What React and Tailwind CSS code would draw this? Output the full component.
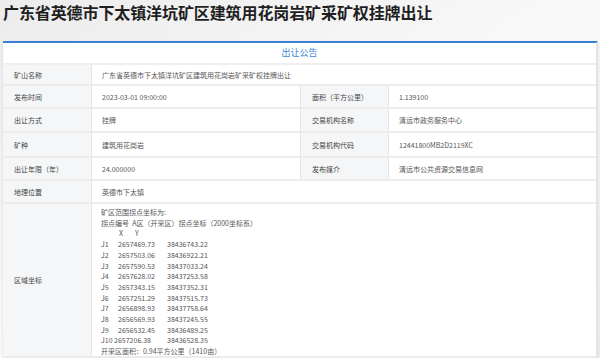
import React from 'react';

const info = [
  { label: '矿山名称', value: '广东省英德市下太镇洋坑矿区建筑用花岗岩矿采矿权挂牌出让', h: 'h-[21px]' },
  { label: '发布时间', value: '2023-03-01 09:00:00', label2: '面积（平方公里）', value2: '1.139100', h: 'h-[23px]' },
  { label: '出让方式', value: '挂牌', label2: '交易机构名称', value2: '清远市政务服务中心', h: 'h-[24px]' },
  { label: '矿种', value: '建筑用花岗岩', label2: '交易机构代码', value2: '12441800MB2D2119XC', h: 'h-[25px]' },
  { label: '出让年限（年）', value: '24.000000', label2: '发布媒介', value2: '清远市公共资源交易信息网', h: 'h-[23px]' },
  { label: '地理位置', value: '英德市下太镇', h: 'h-[23px]' },
];

const points = [
  ['J1', '2657469.73', '38436743.22'],
  ['J2', '2657503.06', '38436922.21'],
  ['J3', '2657590.53', '38437033.24'],
  ['J4', '2657628.02', '38437253.58'],
  ['J5', '2657343.15', '38437352.31'],
  ['J6', '2657251.29', '38437515.73'],
  ['J7', '2656898.93', '38437758.64'],
  ['J8', '2656569.93', '38437245.55'],
  ['J9', '2656532.45', '38436489.25'],
];

const Label = ({ children, className = '' }) => (
  <div className={`bg-[#f5f6f7] text-[#444] flex items-center pl-[11px] ${className}`}>{children}</div>
);

const Value = ({ children, className = '' }) => (
  <div className={`bg-white text-[#555] flex items-center pl-[10px] ${className}`}>{children}</div>
);

const App = () => {
  return (
    <div className="w-[600px] h-[358px] overflow-hidden bg-gradient-to-br from-[#ececec] via-[#f9f9f9] to-[#efefef] font-['Noto_Sans_CJK_SC',sans-serif]">
      <h1 className="h-[41px] pl-[3px] pt-[2px] text-[16px] leading-[20px] font-bold text-[#1f1f1f] tracking-[-0.1px]">
        广东省英德市下太镇洋坑矿区建筑用花岗岩矿采矿权挂牌出让
      </h1>

      <div className="ml-[3px] w-[595px] bg-white border-t-2 border-[#3a7fd8] border-r-2 border-r-[#e4e4e4] shadow-sm">
        <div className="h-[22px] flex items-center justify-center text-[9px] text-[#3d86d6] border-b-2 border-[#efefef]">
          出让公告
        </div>

        <div className="text-[7px] leading-[10px]">
          {info.map((r) => (
            <div key={r.label} className={`flex border-b-2 border-[#ececec] ${r.h}`}>
              <Label className="w-[89px] border-r border-[#e6e6e6]">{r.label}</Label>
              {r.label2 ? (
                <>
                  <Value className="w-[208px]">{r.value}</Value>
                  <Label className="w-[89px] border-x border-[#e6e6e6]">{r.label2}</Label>
                  <Value className="flex-1">{r.value2}</Value>
                </>
              ) : (
                <Value className="flex-1">{r.value}</Value>
              )}
            </div>
          ))}

          <div className="flex h-[154px] border-b-2 border-[#ececec]">
            <Label className="w-[89px] border-r border-[#e6e6e6]">区域坐标</Label>
            <div className="flex-1 bg-white text-[#555] pl-[9px] pt-[3px] leading-[10.7px] whitespace-nowrap">
              <div>矿区范围拐点坐标为:</div>
              <div>拐点编号&nbsp;&nbsp;A区（开采区）拐点坐标（2000坐标系）</div>
              <div className="flex">
                <span className="ml-[18px]">X</span>
                <span className="ml-[12px]">Y</span>
              </div>
              {points.map(([j, x, y]) => (
                <div key={j} className="flex">
                  <span className="w-[17px]">{j}</span>
                  <span className="w-[49px]">{x}</span>
                  <span>{y}</span>
                </div>
              ))}
              <div className="flex">
                <span className="w-[66px]">J10&nbsp;2657206.38</span>
                <span>38436528.35</span>
              </div>
              <div>开采区面积：0.94平方公里（1410亩）</div>
            </div>
          </div>
        </div>
      </div>
    </div>
  );
};

export default App;
